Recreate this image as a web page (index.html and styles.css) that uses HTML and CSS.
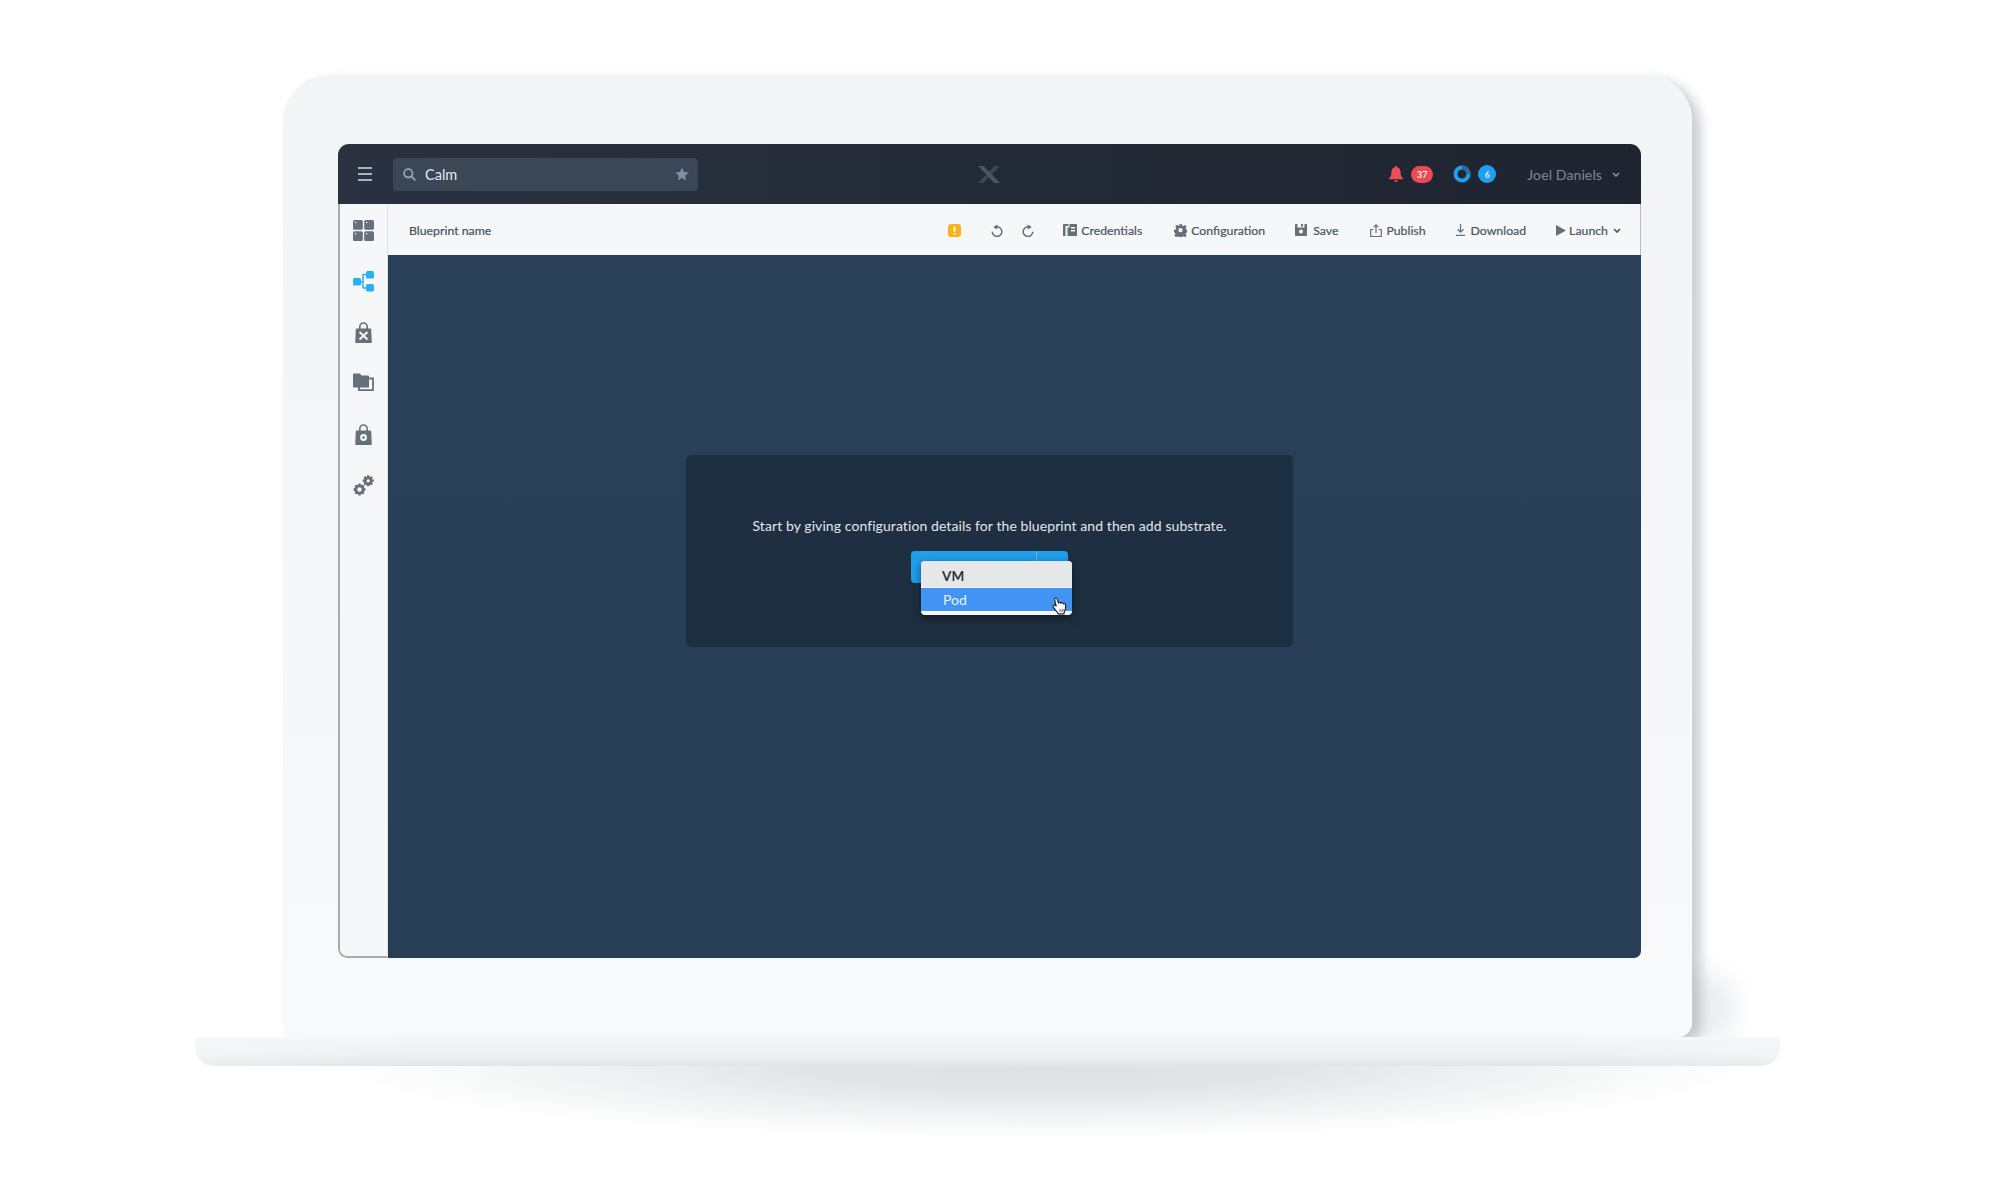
FILE: index.html
```html
<!DOCTYPE html>
<html lang="en">
<head>
<meta charset="utf-8">
<title>Calm Blueprint</title>
<link rel="stylesheet" href="styles.css">
</head>
<body>
<div class="stage">
  <div class="lid">
    <div class="screen">
      <header class="topbar">
        <svg class="burger" viewBox="0 0 14 14"><path d="M0 1h14M0 7h14M0 13h14"/></svg>
        <div class="search">
          <svg class="search-icon" viewBox="0 0 13 13"><circle cx="5.300" cy="5.300" r="4.200"/><path d="M8.400 8.400l3.900 3.900"/></svg>
          <span class="search-text">Calm</span>
          <svg class="star" viewBox="0 0 14 14"><path d="M7 .6l2 4.300 4.700.6-3.500 3.200.9 4.700L7 11.100l-4.100 2.300.9-4.700L.3 5.500 5 4.900z"/></svg>
        </div>
        <svg class="logo" viewBox="0 0 22 17"><path class="logo-a" d="M0 0h5.500L22 17h-5.600z"/><path class="logo-b" d="M22 0h-5.500L11 5.600l2.800 2.800zM0 17h5.500L11 11.400 8.200 8.600z"/></svg>
        <div class="status">
          <svg class="bell" viewBox="0 0 14 16"><path d="M7 0c.8 0 1.300.6 1.300 1.300C10.500 2 11.600 3.900 11.600 6c0 3.500.7 5 2.400 6.500v.8H0v-.8C1.700 11 2.400 9.500 2.400 6c0-2.100 1.100-4 3.300-4.700C5.700.6 6.200 0 7 0zM5.200 14.200h3.600C8.600 15.300 7.900 16 7 16s-1.600-.7-1.800-1.800z"/></svg>
          <span class="pill pill-red">37</span>
          <svg class="ring" viewBox="0 0 18 18"><circle class="ring-base" cx="9" cy="9" r="6.500"/><path class="ring-arc" d="M9 2.500A6.500 6.500 0 0 1 15.500 9"/></svg>
          <span class="pill pill-blue">6</span>
          <span class="user">Joel Daniels</span>
          <svg class="chev chev-user" viewBox="0 0 8 5"><path d="M1 1l3 3 3-3"/></svg>
        </div>
      </header>
      <div class="body">
        <nav class="side">
          <div class="side-item">
            <svg class="side-icon" viewBox="0 0 21 21"><rect x="0" y="0" width="9.800" height="9.800" rx="1.500"/><rect x="11.200" y="0" width="9.800" height="9.800" rx="1.500"/><rect x="0" y="11.200" width="9.800" height="9.800" rx="1.500"/><rect x="11.200" y="11.200" width="9.800" height="9.800" rx="1.500"/><g class="cut"><circle cx="2.500" cy="2.500" r=".8"/><circle cx="13.700" cy="2.500" r=".8"/><circle cx="2.500" cy="13.700" r=".8"/><circle cx="13.700" cy="13.700" r=".8"/></g></svg>
          </div>
          <div class="side-item">
            <svg class="side-icon side-active" viewBox="0 0 21 21"><rect x="0" y="7" width="8" height="7.500" rx="1.500"/><rect x="13" y="0" width="8" height="7.500" rx="1.500"/><rect x="13" y="13" width="8" height="7.500" rx="1.500"/><path class="link" d="M7 10.700h3V4c0-.3.200-.4.400-.4H14M10 10.700v6c0 .3.200.4.400.4H14"/></svg>
          </div>
          <div class="side-item">
            <svg class="side-icon" viewBox="0 0 21 21"><path class="handle" d="M6.800 8V4.700a3.700 3.700 0 0 1 7.400 0V8"/><path d="M3.600 6.500h13.800c.4 0 .8.300.8.800l.6 12.900c0 .4-.3.800-.8.800H3c-.5 0-.8-.4-.8-.8l.6-12.900c0-.5.400-.8.800-.8z"/><path class="cut-line" d="M6.500 10l8 7.500M14.500 10l-8 7.500"/></svg>
          </div>
          <div class="side-item">
            <svg class="side-icon" viewBox="0 0 21 21"><path class="stroke-only" d="M6 5.500h14v11.700H6z"/><path d="M1 .5h6l1.500 2H15c.6 0 1 .4 1 1v11H1c-.6 0-1-.4-1-1v-12c0-.6.400-1 1-1z"/></svg>
          </div>
          <div class="side-item">
            <svg class="side-icon" viewBox="0 0 21 21"><path class="handle" d="M6.800 8V4.700a3.700 3.700 0 0 1 7.400 0V8"/><path d="M3.600 6.500h13.800c.4 0 .8.300.8.800l.6 12.900c0 .4-.3.800-.8.800H3c-.5 0-.8-.4-.8-.8l.6-12.900c0-.5.400-.8.800-.8z"/><circle class="cut-fill" cx="10.500" cy="13.500" r="3.400"/><circle cx="10.500" cy="13.500" r="1.300"/></svg>
          </div>
          <div class="side-item">
            <svg class="side-icon" viewBox="0 0 21 21"><circle class="gear-ring" cx="6.500" cy="14.500" r="3.600"/><path class="gear-teeth" d="M6.500 8.500v2.600M6.500 17.900v2.600M.5 14.500h2.600M9.900 14.500h2.600M2.300 10.300l1.800 1.800M8.900 16.900l1.800 1.800M10.700 10.300l-1.800 1.800M4.100 16.900l-1.800 1.800"/><circle class="gear-ring" cx="15.200" cy="5.800" r="3"/><path class="gear-teeth" d="M15.200.3v2.200M15.200 9.100v2.200M9.700 5.800h2.200M18.500 5.800h2.200M11.300 1.900l1.500 1.500M17.600 8.200l1.500 1.500M19.100 1.900l-1.500 1.500M12.800 8.200l-1.500 1.500"/></svg>
          </div>
        </nav>
        <div class="main">
          <div class="toolbar">
            <span class="bp-name">Blueprint name</span>
            <div class="tools">
              <svg class="warn" viewBox="0 0 13 13"><rect width="13" height="13" rx="3"/><path class="warn-mark" d="M6.500 2.800v4.600M6.500 9v1.400"/></svg>
              <svg class="hist" viewBox="0 0 12 13"><path d="M3.300 3.700A4.800 4.800 0 1 1 1.200 7.800"/><path class="hist-head" d="M6.300 .6v5L2.400 3.100z"/></svg>
              <svg class="hist hist-redo" viewBox="0 0 12 13"><path d="M8.700 3.700A4.800 4.800 0 1 0 10.800 7.800"/><path class="hist-head" d="M5.700 .6v5l3.900-2.500z"/></svg>
              <div class="tool tool-first"><svg class="t-icon t-cred" viewBox="0 0 14 12"><path d="M0 1c0-.5.400-1 1-1h4.500v2H2.500v10H0zM6.500 0H13c.6 0 1 .4 1 1v10c0 .6-.4 1-1 1H4.500V3.500h2zM8 3v1.500h4V3zm0 3v1.500h4V6z"/></svg><span>Credentials</span></div>
              <div class="tool"><svg class="t-icon t-gear" viewBox="0 0 14 14"><path d="M5.700 0h2.600l.4 2 1.300.6 1.800-1.100 1.800 1.800-1.100 1.800.6 1.300 1.900.4v2.600l-1.900.4-.6 1.300 1.100 1.800-1.800 1.800-1.800-1.100-1.300.6-.4 1.900H5.700l-.4-1.900-1.300-.6-1.800 1.100L.4 12.700l1.100-1.800-.6-1.300L-.1 9.200V6.600l2-.4.600-1.300L1.400 3l1.800-1.800L5 2.300l1.300-.6zM7 4.800A2.200 2.200 0 1 0 7 9.200 2.200 2.200 0 1 0 7 4.800z" transform="translate(0 -.4)"/></svg><span>Configuration</span></div>
              <div class="tool tool-tight"><svg class="t-icon t-save" viewBox="0 0 12 12"><path d="M1 0h1.500v3.500h7V0H11c.6 0 1 .4 1 1v10c0 .6-.4 1-1 1H1c-.6 0-1-.4-1-1V1c0-.6.400-1 1-1zM6 5.500a2 2 0 1 0 0 4 2 2 0 1 0 0-4zM6 0h2v2.500H6z"/></svg><span>Save</span></div>
              <div class="tool"><svg class="t-icon t-pub" viewBox="0 0 12 13"><path d="M3.500 5.500H.7v7h10.600v-7H8.500M6 9V.8M3.600 3.200L6 .8l2.400 2.400"/></svg><span>Publish</span></div>
              <div class="tool tool-tight"><svg class="t-icon t-down" viewBox="0 0 9 12"><path d="M4.500 0v8M1.500 5.200l3 3 3-3M0 11.300h9"/></svg><span>Download</span></div>
              <div class="tool tool-tight"><svg class="t-icon t-play" viewBox="0 0 10 11"><path d="M0 0l10 5.500L0 11z"/></svg><span>Launch</span><svg class="chev chev-launch" viewBox="0 0 8 5"><path d="M1 1l3 3 3-3"/></svg></div>
            </div>
          </div>
          <div class="canvas">
            <div class="card">
              <p class="hint">Start by giving configuration details for the blueprint and then add substrate.</p>
              <div class="add">
                <div class="add-main"></div>
                <div class="add-side"></div>
                <ul class="menu">
                  <li class="menu-item">VM</li>
                  <li class="menu-item menu-on">Pod
                    <svg class="hand" viewBox="0 0 15 18"><path d="M3.200 1.200c.8-.5 1.700 0 2 .9l1.200 3.700c.2-.6 1-.9 1.600-.6.500.2.800.6.900 1 .3-.5 1-.7 1.600-.5.500.2.800.6.900 1.100.4-.3 1-.3 1.400 0 .6.400.9 1.100.9 1.900 0 2.500-.3 4.200-1.100 5.800-.4.800-.6 1.400-.6 2.400H6.200c0-1-.6-1.500-1.300-2.100C3.700 13.600 2.500 11.700 1.300 10c-.5-.7-.3-1.500.3-1.900.6-.4 1.300-.2 1.900.4l.8.900L2.700 3c-.3-.7-.1-1.400.5-1.800z"/><path class="hand-lines" d="M8 12v3M10 12v3M12 12v3"/></svg>
                  </li>
                </ul>
              </div>
            </div>
          </div>
        </div>
      </div>
    </div>
  </div>
  <div class="base"></div>
</div>
</body>
</html>
```
FILE: styles.css
```css
* { box-sizing: border-box; }
html, body { margin: 0; background: #fff; }
body { font-family: "Lato", "Liberation Sans", sans-serif; width: 2000px; height: 1200px; overflow: hidden; }

.stage { width: 1975px; height: 1200px; padding-top: 75px; display: flex; flex-direction: column; align-items: center; isolation: isolate; }

.lid { position: relative; width: 1409px; height: 962px; padding: 69px 51px 78px 55px; border-radius: 46px 46px 14px 14px; background: linear-gradient(180deg, #f3f4f6 0%, #f6f7f9 60%, #f8f9fa 100%); box-shadow: 9px 5px 11px rgba(140, 150, 158, .45); }
.lid::after { content: ""; position: absolute; z-index: -1; bottom: -6px; right: -44px; width: 80px; height: 70px; border-radius: 40%; background: #eceef0; filter: blur(11px); }

.screen { width: 1303px; height: 814px; display: flex; flex-direction: column; border-radius: 11px 11px 7px 9px; overflow: hidden; }

.topbar { height: 60px; flex: none; display: flex; align-items: center; position: relative; padding-left: 20px; background: linear-gradient(90deg, #2a3241 0%, #232a37 50%, #1e2530 100%); }
.burger { width: 14px; height: 14px; fill: none; stroke: #a9b2b9; stroke-width: 1.800; }
.search { width: 305px; height: 33px; margin-left: 21px; display: flex; align-items: center; padding: 0 9px 0 10px; border-radius: 4px; background: #3a4756; }
.search-icon { width: 13px; height: 13px; fill: none; stroke: #9aa4ad; stroke-width: 1.800; }
.search-text { margin-left: 9px; font-size: 14.500px; color: #e6e9ec; flex: 1; }
.star { width: 14px; height: 14px; fill: #7d90a3; }
.logo { position: absolute; left: 640px; top: 22px; width: 22px; height: 17px; }
.logo-a { fill: #4a5763; }
.logo-b { fill: #3d4854; }
.status { margin-left: auto; display: flex; align-items: center; padding-right: 21px; }
.bell { width: 14px; height: 16px; fill: #ea4f56; }
.pill { display: flex; align-items: center; justify-content: center; height: 17px; border-radius: 9px; font-size: 9px; font-weight: 700; color: #fbe9ea; }
.pill-red { width: 22px; margin-left: 8px; background: #e84c52; }
.pill-blue { width: 18px; height: 18px; margin-left: 7px; background: #1f9ff0; color: #d6edfb; }
.ring { width: 18px; height: 18px; margin-left: 20px; fill: none; }
.ring-base { stroke: #1f9ff0; stroke-width: 4; }
.ring-arc { stroke: #2a6c9e; stroke-width: 4; }
.user { margin-left: 31px; font-size: 14px; letter-spacing: .12px; color: #7e8994; }
.chev { fill: none; stroke-width: 1.500; width: 8px; height: 5px; }
.chev-user { margin-left: 10px; stroke: #8b959f; }

.body { flex: 1; display: flex; min-height: 0; }
.side { width: 50px; flex: none; padding-top: 1px; background: #f5f7f9; border-left: 2px solid #a5abb0; border-bottom: 2px solid #a5abb0; border-right: 1px solid #dfe2e5; border-bottom-left-radius: 9px; }
.side-item { height: 51px; display: flex; align-items: center; justify-content: center; padding-right: 1px; }
.side-icon { width: 21px; height: 21px; fill: #66707b; }
.cut { fill: #f5f7f9; }
.side-active { fill: #29b0ef; }
.link { fill: none; stroke: #29b0ef; stroke-width: 1.500; }
.handle { fill: none; stroke: #66707b; stroke-width: 1.600; }
.cut-line { fill: none; stroke: #f5f7f9; stroke-width: 2; }
.cut-fill { fill: #f5f7f9; }
.stroke-only { fill: #f5f7f9; stroke: #66707b; stroke-width: 1.800; }
.gear-ring { fill: none; stroke: #66707b; stroke-width: 2.800; }
.gear-teeth { fill: none; stroke: #66707b; stroke-width: 2.400; }

.main { flex: 1; display: flex; flex-direction: column; min-width: 0; }
.toolbar { height: 51px; flex: none; display: flex; align-items: center; padding: 1px 19px 0 21px; background: #f5f7f9; border-right: 1px solid #b6bbc0; }
.bp-name { font-size: 12.300px; color: #46515c; -webkit-text-stroke: .2px #46515c; }
.tools { margin-left: auto; display: flex; align-items: center; }
.warn { width: 13px; height: 13px; fill: #f9b31d; }
.warn-mark { fill: none; stroke: #fff; stroke-width: 1.800; }
.hist { width: 12px; height: 13px; margin-left: 30px; fill: none; stroke: #66707b; stroke-width: 1.500; }
.hist-redo { margin-left: 19px; }
.hist-head { fill: #66707b; stroke: none; }
.tool { display: flex; align-items: center; margin-left: 32px; font-size: 12.300px; color: #4a555f; -webkit-text-stroke: .2px #4a555f; white-space: nowrap; }
.tool-first { margin-left: 29px; }
.tool-tight { margin-left: 30px; }
.t-icon { margin-right: 4px; flex: none; fill: #66707b; }
.t-cred { width: 14px; height: 12px; }
.t-gear { width: 13px; height: 13px; }
.t-save { width: 12px; height: 12px; margin-right: 6px; }
.t-pub { width: 12px; height: 13px; fill: none; stroke: #66707b; stroke-width: 1.200; }
.t-down { width: 9px; height: 12px; margin-right: 6px; fill: none; stroke: #66707b; stroke-width: 1.300; }
.t-play { width: 10px; height: 11px; margin-right: 3px; }
.chev-launch { margin-left: 5px; stroke: #4d5761; stroke-width: 1.700; }

.canvas { flex: 1; padding: 200px 0 0 298px; background: linear-gradient(180deg, #2a4058 0%, #283e56 100%); }
.card { width: 607px; height: 192px; padding-top: 61px; border-radius: 5px; background: #1e2f41; display: flex; flex-direction: column; align-items: center; }
.hint { margin: 0; font-size: 14px; line-height: 20px; letter-spacing: .08px; color: #e3e6e9; }
.add { position: relative; width: 157px; height: 32px; margin-top: 15px; display: flex; }
.add-main { width: 125px; background: #20a0ec; border-radius: 4px 0 0 4px; }
.add-side { flex: 1; background: #20a0ec; border-left: 1px solid #5fbcf2; border-radius: 0 4px 4px 0; }
.menu { position: absolute; left: 10px; top: 10px; width: 151px; height: 54px; margin: 0; padding: 0 0 4px; list-style: none; background: #f6f7f8; border-radius: 4px; box-shadow: 0 3px 10px rgba(5, 12, 22, .55); }
.menu-item { position: relative; height: 26px; padding-left: 21px; font-size: 13.500px; line-height: 30px; font-weight: 700; color: #2c333b; background: #e6e7e9; border-radius: 4px 4px 0 0; }
.menu-on { height: 24px; padding-left: 22px; font-size: 14px; border-top: 1px solid #f2f4f6; border-radius: 0; line-height: 23px; font-weight: 400; color: #eaf3fe; background: #4193f4; }
.hand { position: absolute; left: 131px; top: 9px; width: 15px; height: 18px; fill: #fff; stroke: #1a2026; stroke-width: 1.100; }
.hand-lines { fill: none; stroke: #3a4047; stroke-width: .8; }

.base { position: relative; width: 1585px; height: 29px; flex: none; border-radius: 3px 3px 20px 20px / 3px 3px 18px 18px; background: linear-gradient(90deg, rgba(255,255,255,.3) 0%, rgba(255,255,255,0) 15%, rgba(255,255,255,0) 85%, rgba(255,255,255,.3) 100%), linear-gradient(180deg, #f4f5f7 0%, #eef0f2 55%, #e2e5e7 100%); }
.base::after { content: ""; position: absolute; z-index: -1; top: 100%; left: 150px; right: 37px; height: 72px; background: radial-gradient(ellipse 50% 100% at 50% 0, #dee1e4 0%, #e2e5e8 35%, #eef0f1 62%, #f8f9f9 84%, #fdfdfd 96%, #fff 100%); }
```
